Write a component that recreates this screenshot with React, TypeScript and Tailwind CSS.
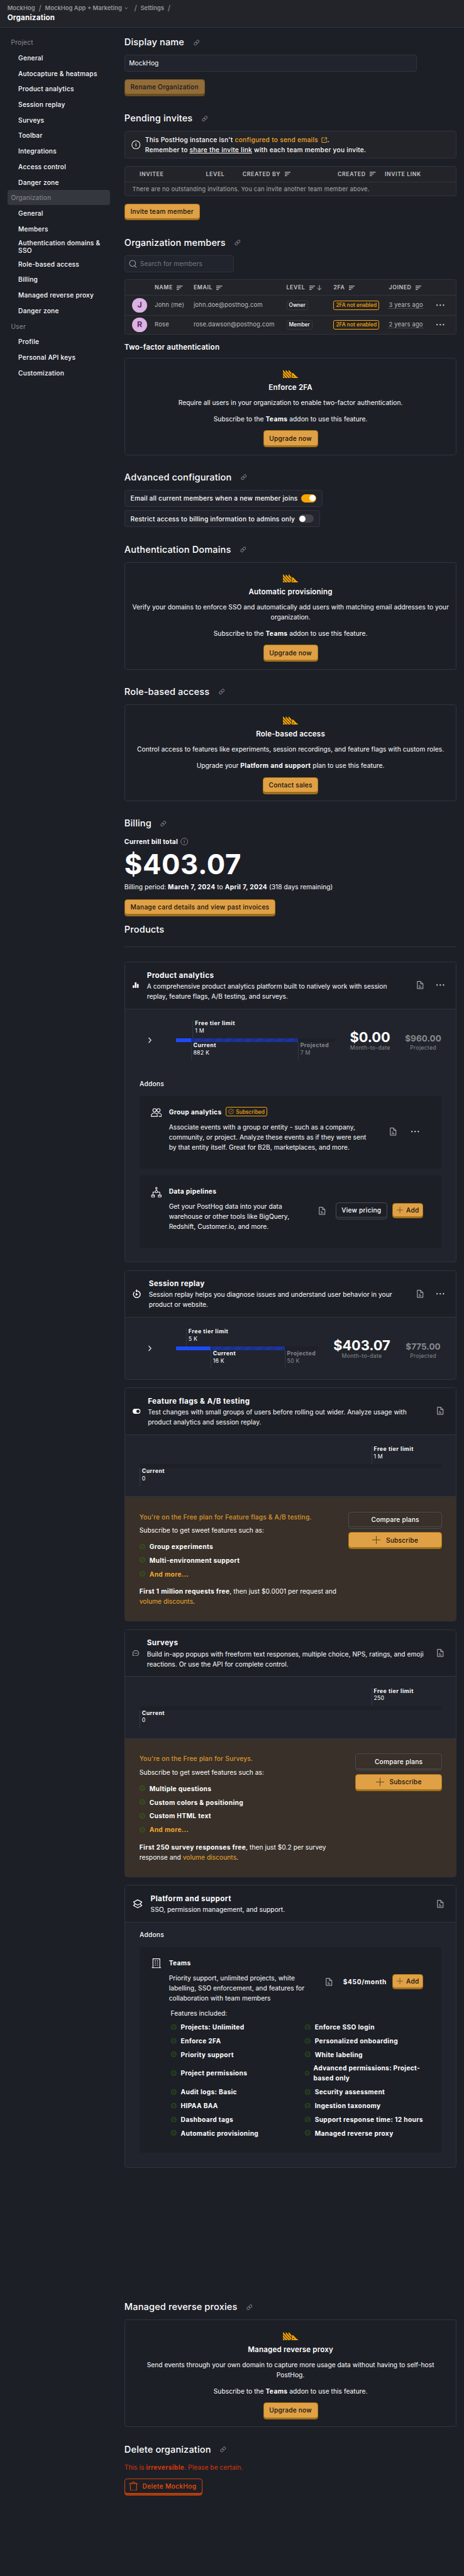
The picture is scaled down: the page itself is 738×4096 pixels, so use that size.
import React from "react";
import { Link as LinkIcon } from "lucide-react";

type P = { children?: React.ReactNode; className?: string };

/* ---------- icons ---------- */

function Sort({ down }: { down?: boolean }) {
  return (
    <span className="ml-[9px] inline-flex items-center gap-[4px]">
      <svg width="13" height="10" viewBox="0 0 13 10" stroke="currentColor" strokeWidth="1.6" className="shrink-0">
        <path d="M0 1.3h13M0 5h9M0 8.7h5" />
      </svg>
      {down && (
        <svg width="11" height="12" viewBox="0 0 11 12" fill="none" stroke="currentColor" strokeWidth="1.3">
          <path d="M5.5 .5v10.5M1 6.8 5.5 11.2 10 6.8" />
        </svg>
      )}
    </span>
  );
}

function Doc() {
  return (
    <svg width="20" height="20" viewBox="0 0 24 24" fill="none" stroke="#c4c5c7" strokeWidth="1.6" className="shrink-0">
      <path d="M4.6 2.6h8.6l6.2 6.2v12.6H4.6zM13.2 2.6v6.2h6.2M8.6 13.6h4M8.6 17.4h6.8" />
    </svg>
  );
}

function Dots() {
  return (
    <svg width="20" height="20" viewBox="0 0 20 20" fill="#d2d2d4" className="shrink-0">
      <circle cx="3" cy="10" r="1.6" />
      <circle cx="10" cy="10" r="1.6" />
      <circle cx="17" cy="10" r="1.6" />
    </svg>
  );
}

function Info({ className = "" }: P) {
  return (
    <svg viewBox="0 0 24 24" fill="none" stroke="currentColor" strokeWidth="1.7" className={className}>
      <circle cx="12" cy="12" r="10.6" />
      <path d="M10.4 10.6H12v6.2M12 6.7v1.8" />
    </svg>
  );
}

function Check({ className = "" }: P) {
  return (
    <svg viewBox="0 0 24 24" fill="none" stroke="currentColor" strokeWidth="1.9" className={`shrink-0 ${className}`}>
      <circle cx="12" cy="12" r="10.5" />
      <path d="m8 12.6 3 3 5-7.4" />
    </svg>
  );
}

function Plus({ className = "" }: P) {
  return (
    <svg viewBox="0 0 20 20" stroke="#5c4220" strokeWidth="1.5" className={className}>
      <path d="M10 0v20M0 10h20" />
    </svg>
  );
}

function Logo() {
  return (
    <svg width="33" height="18" viewBox="0 5.4 48 24.6" preserveAspectRatio="none" fill="#f7a501">
      <path d="m0 23.41 6.53 6.53H0v-6.53Zm0-2.41 8.94 8.94h6.53L0 14.47V21Zm0-8.94 17.88 17.88h6.53L0 5.53v6.53Zm8.94 0 17.88 17.88v-6.53L8.94 5.53v6.53Zm8.94-6.53v6.53L26.82 21v-6.53l-8.94-8.94Z" />
      <path
        fillRule="evenodd"
        d="M28.6 15v14.94h19.1v-2.4c-1.9 0-3.200-.6-4.400-1.800L32.600 15.200Zm5.100 12a1.800 1.800 0 1 1 0-3.600 1.800 1.800 0 0 1 0 3.600Z"
      />
    </svg>
  );
}

/* ---------- building blocks ---------- */

function Button({ children, className = "", dim, small }: P & { dim?: boolean; small?: boolean }) {
  return (
    <button
      className={`flex flex-col rounded-[6px] border border-[#b17816] bg-[#8f6926] pb-[2px] ${small ? "h-[33px]" : "h-[37px]"} ${dim ? "opacity-60" : ""} ${className}`}
    >
      <span className="flex w-full flex-1 items-center justify-center rounded-[5px] border-b border-[#b17816] bg-[#e0a045] font-medium tracking-[0.3px] whitespace-nowrap text-[#111]">
        {children}
      </span>
    </button>
  );
}

function Outline({ children, className = "" }: P) {
  return (
    <button className={`flex h-[37px] flex-col rounded-[6px] border border-[#4a4c52] pb-[2px] ${className}`}>
      <span className="flex w-full flex-1 items-center justify-center rounded-[5px] border-b border-[#4a4c52] font-medium tracking-[0.3px] whitespace-nowrap">
        {children}
      </span>
    </button>
  );
}

function Section({ title, children }: P & { title: string }) {
  return (
    <section className="flex flex-col items-start">
      <h2 className="mb-[12px] flex h-[30px] items-center text-[20px] font-medium tracking-[0.22px]">
        {title}
        <LinkIcon className="ml-[20px] size-[13px] text-[#b9babd]" strokeWidth={2} />
      </h2>
      {children}
    </section>
  );
}

function Gate({ title, text, addon, cta, cls }: { title: string; text: string; addon: React.ReactNode; cta: string; cls: string }) {
  return (
    <div className={`flex w-full flex-col items-center rounded-[5px] border border-[#30343e] px-2 pt-[25px] text-center leading-[22px] ${cls}`}>
      <Logo />
      <h3 className="mt-[10px] text-[16px] leading-[24px] font-semibold tracking-[0.2px]">{title}</h3>
      <p className="mt-[9px] whitespace-pre-line">{text}</p>
      <p className="mt-[14px] mb-[14px]">{addon}</p>
      <Button className="px-0">
        <span className="px-[12px]">{cta}</span>
      </Button>
    </div>
  );
}

const teams = (
  <>
    Subscribe to the <b>Teams</b> addon to use this feature.
  </>
);

function Toggle({ on }: { on?: boolean }) {
  return (
    <span className={`flex h-[18px] w-[33px] items-center rounded-full px-[2px] ${on ? "justify-end bg-[#f7a501]" : "bg-[#43444a]"}`}>
      <span className="size-[14px] rounded-full bg-white" />
    </span>
  );
}

function NavItem({ children, head, active }: P & { head?: boolean; active?: boolean }) {
  return (
    <a
      className={`flex min-h-[33px] items-center rounded-[5px] py-[4px] leading-[17px] font-medium tracking-[0.33px] ${head ? "pl-[8px] text-[#8c8d91]" : "pl-[24px]"} ${active ? "bg-[#35373e]" : ""}`}
    >
      {children}
    </a>
  );
}

function Mark({ label, value, className = "" }: { label: string; value: string; className?: string }) {
  return (
    <div className={`h-[40px] shrink-0 border-l border-[#35383f] pl-[4px] text-[12px] leading-[16px] whitespace-nowrap ${className}`}>
      <div className="font-bold tracking-[0.75px]">{label}</div>
      <div className="tracking-[0.3px]">{value}</div>
    </div>
  );
}

function ProductHead({ icon, title, lines, dots, cls }: { icon: React.ReactNode; title: string; lines: string[]; dots?: boolean; cls: string }) {
  return (
    <div className={`flex shrink-0 items-center border-b border-[#30343e] pl-[17px] ${cls}`}>
      {icon}
      <div className="leading-[22px] whitespace-nowrap">
        <h3 className="text-[16px] leading-[25px] font-bold tracking-[0.58px]">{title}</h3>
        {lines.map((l) => (
          <p key={l}>{l}</p>
        ))}
      </div>
      <div className="mr-[24px] ml-auto flex gap-[24px]">
        <Doc />
        {dots && <Dots />}
      </div>
    </div>
  );
}

function Card({ children, className = "" }: P) {
  return (
    <div className={`flex w-full flex-col overflow-hidden rounded-[6px] border border-[#30343e] bg-[#21242c] ${className}`}>{children}</div>
  );
}

type UsageProps = {
  bar: string;
  free: string;
  used: string;
  rest: string;
  limit: string;
  current: string;
  projected: string;
  total: string;
  future: string;
};

function Usage(p: UsageProps) {
  return (
    <div className="flex h-[88px] items-center pr-[32px] pl-[50px]">
      <svg width="10" height="14" viewBox="0 0 10 14" fill="none" stroke="#d5d5d7" strokeWidth="2">
        <path d="m2 1.5 5 5.5-5 5.5" />
      </svg>
      <div className={`ml-[51px] shrink-0 ${p.bar}`}>
        <Mark className={p.free} label="Free tier limit" value={p.limit} />
        <div className="flex h-[8px] bg-[#1e2028]">
          <div className={`mr-[1px] bg-[#1d4aff] ${p.used}`} />
          <div className={`bg-[repeating-linear-gradient(135deg,#1b2f8f_0_8px,#1c3597_8px_16px)] ${p.rest}`} />
        </div>
        <div className="flex">
          <div className={p.used} />
          <Mark className={p.rest} label="Current" value={p.current} />
          <Mark className="border-[#2b2e36] text-[#88898d]" label="Projected" value={p.projected} />
        </div>
      </div>
      <div className="ml-auto text-right">
        <div className="pt-[4px] text-[30px] leading-[30px] font-bold tracking-[-0.1px]">{p.total}</div>
        <div className={`text-[12px] leading-[16px] tracking-[0.37px] text-[#88898d] ${p.total.length > 5 ? "text-center" : ""}`}>Month-to-date</div>
      </div>
      <div className="ml-[32px] w-[80px] text-center text-[#88898d]">
        <div className="pt-[10px] text-[18.5px] leading-[24px] font-bold">{p.future}</div>
        <div className="text-[12px] leading-[16px] tracking-[0.37px]">Projected</div>
      </div>
    </div>
  );
}

function EmptyUsage({ limit }: { limit: string }) {
  return (
    <div className="h-[136px] shrink-0 border-b border-[#30343e] px-[31.5px] pt-[24px]">
      <Mark className="ml-[507px]" label="Free tier limit" value={limit} />
      <div className="h-[8px] bg-[#1e2028]" />
      <Mark label="Current" value="0" />
    </div>
  );
}

function Feature({ children, more }: P & { more?: boolean }) {
  return (
    <div className={`flex h-[30px] items-center gap-[9px] pl-px font-bold tracking-[0.5px] ${more ? "text-[#f1a82c]" : ""}`}>
      <Check className="size-[12px] text-[#388600]" />
      <span>{children}</span>
    </div>
  );
}

function Upsell({ name, features, children, cls }: P & { name: string; features: string[]; cls: string }) {
  return (
    <div className="flex flex-1 justify-between bg-[#383029] pt-[32px] pr-[31px] pl-[31.5px] leading-[22px]">
      <div className="whitespace-nowrap">
        <p className="font-medium tracking-[0.25px] text-[#dc962a]">You're on the Free plan for {name}.</p>
        <p className="mt-[7px] mb-[10px]">Subscribe to get sweet features such as:</p>
        {features.map((f) => (
          <Feature key={f}>{f}</Feature>
        ))}
        <Feature more>And more...</Feature>
        <p className="mt-[12px]">{children}</p>
      </div>
      <div className={`flex flex-col gap-[8px] ${cls}`}>
        <Outline className="w-full">Compare plans</Outline>
        <Button className="w-full">
          <Plus className="mr-[12px] size-[18px]" />
          Subscribe
        </Button>
      </div>
    </div>
  );
}

const th = "font-semibold tracking-[0.82px] text-[12px] text-[#c3c4c6] flex items-center whitespace-nowrap";

function MemberRow({ initial, name, email, level }: { initial: string; name: string; email: string; level: string }) {
  return (
    <div className="flex h-[43px] items-center border-t border-[#30343e] text-[13px] tracking-[0.23px] text-[#bbbcbe]">
      <div className="ml-[16px] flex size-[32px] items-center justify-center rounded-full bg-[#dcb1e3] text-[17px] font-bold text-[#572e5e]">
        {initial}
      </div>
      <div className="ml-[17px] w-[85px]">{name}</div>
      <div className="w-[203px]">{email}</div>
      <div className="w-[103px]">
        <span className="inline-flex h-[21px] items-center rounded-[4px] border border-[#35383f] px-[4px] text-[11.5px] font-medium tracking-[0px] text-white">
          {level}
        </span>
      </div>
      <div className="w-[121px]">
        <span className="inline-flex h-[21px] items-center rounded-[4px] border border-[#f7a501] px-[4px] text-[11.5px] font-medium tracking-[0px] whitespace-nowrap text-[#f7a501]">
          2FA not enabled
        </span>
      </div>
      <div className="w-[103px]">
        <span className="border-b border-dotted border-[#6c6d72]">{level === "Owner" ? "3" : "2"} years ago</span>
      </div>
      <Dots />
    </div>
  );
}

function AddonHead({ icon }: { icon: React.ReactNode }) {
  return (
    <div className="flex w-[64px] shrink-0 justify-center pt-[24px] pl-[8px]">
      <div className="flex size-[24px] items-center justify-center">{icon}</div>
    </div>
  );
}

const AddButton = () => (
  <Button small className="w-[67px]">
    <Plus className="mr-[7px] size-[14px]" />
    Add
  </Button>
);

const nav: [string, string[]][] = [
  ["Project", ["General", "Autocapture & heatmaps", "Product analytics", "Session replay", "Surveys", "Toolbar", "Integrations", "Access control", "Danger zone"]],
  ["Organization", ["General", "Members", "Authentication domains & SSO", "Role-based access", "Billing", "Managed reverse proxy", "Danger zone"]],
  ["User", ["Profile", "Personal API keys", "Customization"]],
];

const teamFeatures: [string, string][] = [
  ["Projects: Unlimited", "Enforce SSO login"],
  ["Enforce 2FA", "Personalized onboarding"],
  ["Priority support", "White labeling"],
  ["Project permissions", "Advanced permissions: Project-based only"],
  ["Audit logs: Basic", "Security assessment"],
  ["HIPAA BAA", "Ingestion taxonomy"],
  ["Dashboard tags", "Support response time: 12 hours"],
  ["Automatic provisioning", "Managed reverse proxy"],
];

export default function App() {
  return (
    <div className="min-h-[5631px] overflow-hidden bg-[#1d1f27] font-['Inter',sans-serif] text-[14px] leading-[20px] tracking-[0.08px] text-white [zoom:0.7274] [&_b]:tracking-[0.5px]">
      <header className="h-[60px] border-b border-[#30343e] bg-[#232429] pt-[9px] pl-[16px]">
        <div className="flex h-[18px] items-center text-[13px] font-semibold tracking-[0px] text-[#96979a]">
          MockHog
          <span className="mx-[8px] text-[16px] font-normal">/</span>
          MockHog App + Marketing
          <svg width="8" height="6" viewBox="0 0 8 6" fill="none" stroke="currentColor" strokeWidth="1.2" className="ml-[6px]">
            <path d="m1 1 3 3.5L7 1" />
          </svg>
          <span className="mr-[8px] ml-[13px] text-[16px] font-normal">/</span>
          Settings
          <span className="mx-[8px] text-[16px] font-normal">/</span>
        </div>
        <div className="mt-[2px] text-[16px] font-bold tracking-[0.3px]">Organization</div>
      </header>

      <div className="flex pr-[16px] pl-[16px]">
        <nav className="mt-[16px] flex w-[224px] shrink-0 flex-col gap-[1px]">
          {nav.map(([group, items]) => (
            <React.Fragment key={group}>
              <NavItem head active={group === "Organization"}>
                <span className="font-normal">{group}</span>
              </NavItem>
              {items.map((i) => (
                <NavItem key={i}>{i}</NavItem>
              ))}
            </React.Fragment>
          ))}
        </nav>

        <main className="ml-[32px] flex min-w-0 flex-1 flex-col gap-[34px] pt-[18px]">
          <Section title="Display name">
            <div className="flex h-[37px] w-[640px] items-center rounded-[5px] border border-[#30343e] bg-[#21242c] pl-[9px]">MockHog</div>
            <Button dim className="mt-[16px]">
              <span className="px-[12px]">Rename Organization</span>
            </Button>
          </Section>

          <Section title="Pending invites">
            <div className="flex h-[61px] w-full items-center rounded-[5px] border border-[#30343e] bg-[#232429] pl-[14px] leading-[22px] font-medium tracking-[0.36px]">
              <Info className="mr-[10px] size-[20px]" />
              <div>
                <p>
                  This PostHog instance isn't <span className="text-[#f1a82c]">configured to send emails</span>
                  <svg viewBox="0 0 14 14" fill="none" stroke="#f1a82c" strokeWidth="1.4" className="ml-[7px] inline size-[13px] align-[-2px]">
                    <path d="M6 1.5H1.3v11h11V8M8 1.2h4.8V6M12.6 1.4 6 8" />
                  </svg>
                  .
                </p>
                <p>
                  Remember to <span className="underline underline-offset-2">share the invite link</span> with each team member you invite.
                </p>
              </div>
            </div>
            <div className="mt-[16px] h-[66px] w-full rounded-[5px] border border-[#30343e] bg-[#232429]">
              <div className="flex h-[33px] items-center pl-[32px]">
                <span className={`w-[145px] ${th}`}>INVITEE</span>
                <span className={`w-[80px] ${th}`}>LEVEL</span>
                <span className={`w-[208px] ${th}`}>
                  CREATED BY <Sort />
                </span>
                <span className={`w-[103px] ${th}`}>
                  CREATED <Sort />
                </span>
                <span className={th}>INVITE LINK</span>
              </div>
              <div className="flex h-[32px] items-center border-t border-[#30343e] pl-[16px] text-[13px] tracking-[0.27px] text-[#a9aaad]">
                There are no outstanding invitations. You can invite another team member above.
              </div>
            </div>
            <Button className="mt-[16px]">
              <span className="px-[12px]">Invite team member</span>
            </Button>
          </Section>

          <Section title="Organization members">
            <div className="flex h-[37px] w-[240px] items-center rounded-[5px] border border-[#30343e] bg-[#21242c] pl-[9px] text-[#77787d]">
              <svg width="18" height="18" viewBox="0 0 18 18" fill="none" stroke="#a5a6a9" strokeWidth="1.4" className="mr-[6px]">
                <circle cx="8" cy="8" r="6.6" />
                <path d="m12.6 13 4 4" />
              </svg>
              Search for members
            </div>
            <div className="mt-[16px] h-[121px] w-full rounded-[5px] border border-[#30343e] bg-[#232429]">
              <div className="flex h-[33px] items-center pl-[65px]">
                <span className={`w-[85px] ${th}`}>
                  NAME <Sort />
                </span>
                <span className={`w-[203px] ${th}`}>
                  EMAIL <Sort />
                </span>
                <span className={`w-[103px] ${th}`}>
                  LEVEL <Sort down />
                </span>
                <span className={`w-[121px] ${th}`}>
                  2FA <Sort />
                </span>
                <span className={th}>
                  JOINED <Sort />
                </span>
              </div>
              <MemberRow initial="J" name="John (me)" email="john.doe@posthog.com" level="Owner" />
              <MemberRow initial="R" name="Rose" email="rose.dawson@posthog.com" level="Member" />
            </div>
            <h3 className="mt-[16px] mb-[10px] text-[16px] leading-[24px] font-semibold tracking-[0.27px]">Two-factor authentication</h3>
            <Gate cls="h-[213px]" title="Enforce 2FA" text="Require all users in your organization to enable two-factor authentication." addon={teams} cta="Upgrade now" />
          </Section>

          <Section title="Advanced configuration">
            <div className="flex h-[37px] items-center gap-[8px] rounded-[5px] border border-[#30343e] bg-[#21242c] px-[12px] font-medium tracking-[0.29px]">
              Email all current members when a new member joins <Toggle on />
            </div>
            <div className="mt-[8px] flex h-[37px] items-center gap-[8px] rounded-[5px] border border-[#30343e] bg-[#21242c] px-[12px] font-medium tracking-[0.29px]">
              Restrict access to billing information to admins only <Toggle />
            </div>
          </Section>

          <Section title="Authentication Domains">
            <Gate
              cls="h-[235px]"
              title="Automatic provisioning"
              text={"Verify your domains to enforce SSO and automatically add users with matching email addresses to your\norganization."}
              addon={teams}
              cta="Upgrade now"
            />
          </Section>

          <Section title="Role-based access">
            <Gate
              cls="h-[212px]"
              title="Role-based access"
              text="Control access to features like experiments, session recordings, and feature flags with custom roles."
              addon={
                <>
                  Upgrade your <b>Platform and support</b> plan to use this feature.
                </>
              }
              cta="Contact sales"
            />
          </Section>

          <Section title="Billing">
            <div className="flex h-[24px] items-center font-bold tracking-[0.4px]">
              Current bill total <Info className="ml-[5px] size-[17px] text-[#8c8d91]" />
            </div>
            <div className="h-[76px] text-[60px] leading-[76px] font-bold tracking-[0.8px]">$403.07</div>
            <p className="h-[22px] leading-[22px]">
              Billing period: <b>March 7, 2024</b> to <b>April 7, 2024</b> (318 days remaining)
            </p>
            <Button className="mt-[16px]">
              <span className="px-[12px]">Manage card details and view past invoices</span>
            </Button>
            <h2 className="mt-[16px] h-[30px] text-[20px] leading-[30px] font-medium tracking-[0.22px]">Products</h2>
            <div className="mt-[20px] mb-[32px] w-full border-b border-[#30343e]" />

            <div className="mb-[256px] flex w-full flex-col gap-[17px]">
              <Card className="h-[658px]">
                <ProductHead
                  cls="h-[103px] bg-[#1d1f27]"
                  dots
                  icon={
                    <svg width="13" height="12" viewBox="0 0 13 12" fill="#fff" className="mr-[18px] shrink-0">
                      <rect y="6.5" width="3.6" height="5.5" rx=".6" />
                      <rect x="4.7" width="3.6" height="12" rx=".6" />
                      <rect x="9.4" y="3.5" width="3.6" height="8.5" rx=".6" />
                    </svg>
                  }
                  title="Product analytics"
                  lines={["A comprehensive product analytics platform built to natively work with session", "replay, feature flags, A/B testing, and surveys."]}
                />
                <div className="pt-[24px]">
                  <Usage
                    bar="w-[349px]"
                    free="ml-[37px]"
                    used="w-[33px]"
                    rest="w-[234px]"
                    limit="1 M"
                    current="882 K"
                    projected="7 M"
                    total="$0.00"
                    future="$960.00"
                  />
                </div>
                <div className="px-[32px]">
                  <h4 className="mt-[40px] mb-[16px] leading-[22px] font-medium tracking-[0.3px]">Addons</h4>
                  <div className="flex h-[158px] rounded-[5px] bg-[#1d1f27]">
                    <AddonHead
                      icon={
                        <svg viewBox="0 0 24 24" fill="none" stroke="#fff" strokeWidth="1.5" className="size-[24px]">
                          <circle cx="8" cy="7.3" r="3.6" />
                          <circle cx="16.6" cy="7.3" r="3.6" />
                          <path d="M.9 20.8v-1.6C1 15.6 4 13.4 7.6 13.4s6.4 2.2 6.5 5.8v1.6zM17 20.8h6.2v-1.6c-.1-3.4-3-5.8-6.6-5.8-1 0-2 .2-2.8.6" />
                        </svg>
                      }
                    />
                    <div className="pt-[23px] leading-[22px] whitespace-nowrap">
                      <div className="mb-[11px] flex h-[22px] items-center gap-[9px]">
                        <b>Group analytics</b>
                        <span className="flex h-[21px] items-center gap-[5px] rounded-[4px] border border-[#f7a501] px-[4px] text-[11.5px] font-medium tracking-[0px] text-[#f7a501]">
                          <Check className="size-[12px]" /> Subscribed
                        </span>
                      </div>
                      <p>Associate events with a group or entity - such as a company,</p>
                      <p>community, or project. Analyze these events as if they were sent</p>
                      <p>by that entity itself. Great for B2B, marketplaces, and more.</p>
                    </div>
                    <div className="mt-[67px] mr-[48px] ml-auto flex gap-[28px]">
                      <Doc />
                      <Dots />
                    </div>
                  </div>
                  <div className="mt-[16px] flex h-[158px] rounded-[5px] bg-[#1d1f27]">
                    <AddonHead
                      icon={
                        <svg viewBox="0 0 24 24" fill="none" stroke="#fff" strokeWidth="1.4" className="size-[24px]">
                          <circle cx="12" cy="3" r="1.7" />
                          <circle cx="12" cy="10.8" r="2.6" />
                          <path d="M12 4.8v3.3M9.5 11.6H4.6V18M14.5 11.6h4.9V18M1.6 18.4h6.2v4H1.6zM16.2 18.4h6.2v4h-6.2z" />
                        </svg>
                      }
                    />
                    <div className="pt-[23px] leading-[22px] whitespace-nowrap">
                      <b className="mb-[11px] block">Data pipelines</b>
                      <p>Get your PostHog data into your data</p>
                      <p>warehouse or other tools like BigQuery,</p>
                      <p>Redshift, Customer.io, and more.</p>
                    </div>
                    <div className="mt-[58px] mr-[40px] ml-auto flex h-[37px] items-center">
                      <Doc />
                      <Outline className="mr-[12px] ml-[20px] w-[112px]">View pricing</Outline>
                      <AddButton />
                    </div>
                  </div>
                </div>
              </Card>

              <Card className="h-[239px]">
                <ProductHead
                  cls="h-[101.5px] bg-[#1d1f27]"
                  dots
                  icon={
                    <svg width="18" height="20" viewBox="0 0 18 20" fill="none" stroke="#fff" strokeWidth="2" className="mr-[17px] shrink-0">
                      <path d="M9 3.6a7.4 7.4 0 1 1-5.2 2.2" />
                      <path d="M9.6 0v7.2L5.8 3.6zM6.7 7.8v6.6l5.4-3.3z" fill="#fff" stroke="none" />
                    </svg>
                  }
                  title="Session replay"
                  lines={["Session replay helps you diagnose issues and understand user behavior in your", "product or website."]}
                />
                <div className="pt-[24px]">
                  <Usage
                    bar="w-[311px]"
                    free="ml-[22.5px]"
                    used="w-[76px]"
                    rest="w-[162px]"
                    limit="5 K"
                    current="16 K"
                    projected="50 K"
                    total="$403.07"
                    future="$775.00"
                  />
                </div>
              </Card>

              <Card className="h-[512px]">
                <ProductHead
                  cls="h-[102.5px] bg-[#1d1f27]"
                  icon={
                    <svg width="17" height="11" viewBox="0 0 17 11" className="mr-[16px] shrink-0">
                      <rect x=".8" y=".8" width="15.4" height="9.4" rx="4.7" fill="#fff" stroke="#fff" strokeWidth="1.5" />
                      <circle cx="11.6" cy="5.5" r="3.5" fill="#1d1f27" />
                    </svg>
                  }
                  title="Feature flags & A/B testing"
                  lines={["Test changes with small groups of users before rolling out wider. Analyze usage with", "product analytics and session replay."]}
                />
                <EmptyUsage limit="1 M" />
                <Upsell cls="w-[204px]" name="Feature flags & A/B testing" features={["Group experiments", "Multi-environment support"]}>
                  <b>First 1 million requests free</b>, then just $0.0001 per request and
                  <br />
                  <span className="text-[#f1a82c]">volume discounts</span>.
                </Upsell>
              </Card>

              <Card className="h-[542px]">
                <ProductHead
                  cls="h-[102.5px] bg-[#1d1f27]"
                  icon={
                    <svg width="14" height="13" viewBox="0 0 14 13" fill="none" stroke="#fff" strokeWidth="1" className="mr-[17px] shrink-0">
                      <path d="M.6 12.4V6.3A5.8 5.8 0 0 1 7 .6a6 6 0 0 1 6.4 5.8A6 6 0 0 1 7.2 12.4z" />
                      <path d="M3.8 6.5h1.4M6.4 6.5h1.4M9 6.5h1.4" strokeWidth="1.4" />
                    </svg>
                  }
                  title="Surveys"
                  lines={["Build in-app popups with freeform text responses, multiple choice, NPS, ratings, and emoji", "reactions. Or use the API for complete control."]}
                />
                <EmptyUsage limit="250" />
                <Upsell cls="w-[189px]" name="Surveys" features={["Multiple questions", "Custom colors & positioning", "Custom HTML text"]}>
                  <b>First 250 survey responses free</b>, then just $0.2 per survey
                  <br />
                  response and <span className="text-[#f1a82c]">volume discounts</span>.
                </Upsell>
              </Card>

              <Card className="h-[618px]">
                <ProductHead
                  cls="h-[81px] bg-[#1d1f27]"
                  icon={
                    <svg width="22" height="20" viewBox="0 0 22 20" fill="none" stroke="#fff" strokeWidth="1.8" className="mr-[17px] shrink-0">
                      <path d="M11 1.3 20 6l-3.600 4L11 12.700 5.600 10 2 6zM5.400 10 2 13.800l9 4.800 9-4.800-3.400-3.800" strokeLinejoin="round" />
                    </svg>
                  }
                  title="Platform and support"
                  lines={["SSO, permission management, and support."]}
                />
                <div className="px-[32px] pt-[15px]">
                  <h4 className="mb-[16px] leading-[22px] font-medium tracking-[0.3px]">Addons</h4>
                  <div className="flex h-[450px] rounded-[5px] bg-[#1d1f27]">
                    <AddonHead
                      icon={
                        <svg viewBox="0 0 24 24" fill="none" stroke="#fff" strokeWidth="1.5" className="size-[24px]">
                          <path d="M4.5 21.5V2.2h15v19.3M1.8 21.7h20.4" />
                          <path d="M8.5 7h2.2M13.3 7h2.2M8.5 11.5h2.2M13.3 11.5h2.2M8.5 16h2.2M13.3 16h2.2" strokeWidth="2" />
                        </svg>
                      }
                    />
                    <div className="flex-1 pt-[23px] leading-[22px] whitespace-nowrap">
                      <div className="flex">
                        <div>
                          <b className="mb-[11px] block">Teams</b>
                          <p>Priority support, unlimited projects, white</p>
                          <p>labelling, SSO enforcement, and features for</p>
                          <p>collaboration with team members</p>
                        </div>
                        <div className="mt-[37px] mr-[40px] ml-auto flex h-[33px] items-center">
                          <Doc />
                          <span className="mr-[12px] ml-[21px] w-[96px] font-bold tracking-[0.9px]">$450/month</span>
                          <AddButton />
                        </div>
                      </div>
                      <p className="mt-[12px] ml-[4px]">Features included:</p>
                      <div className="mt-[4px] ml-[4px] flex flex-col">
                        {teamFeatures.map(([a, b]) => (
                          <div key={a} className={`flex items-center ${b.length > 35 ? "h-[52px]" : "h-[30px]"}`}>
                            <div className="w-[293px]">
                              <Feature>{a}</Feature>
                            </div>
                            {b.length > 35 ? (
                              <div className="flex w-[260px] items-center gap-[8px] pl-px font-bold tracking-[0.45px] whitespace-normal">
                                <Check className="size-[10px] text-[#388600]" />
                                <span>{b}</span>
                              </div>
                            ) : (
                              <Feature>{b}</Feature>
                            )}
                          </div>
                        ))}
                      </div>
                    </div>
                  </div>
                </div>
              </Card>
            </div>
          </Section>

          <Section title="Managed reverse proxies">
            <Gate
              cls="h-[235px]"
              title="Managed reverse proxy"
              text={"Send events through your own domain to capture more usage data without having to self-host\nPostHog."}
              addon={teams}
              cta="Upgrade now"
            />
          </Section>

          <Section title="Delete organization">
            <p className="mb-[14px] h-[22px] leading-[22px] text-[#db3707]">
              This is <b>irreversible</b>. Please be certain.
            </p>
            <button className="flex h-[37px] flex-col rounded-[6px] border border-[#d14509] bg-[#a03b0d] pb-[2px] font-medium tracking-[0.5px] text-[#f54e00]">
              <span className="flex flex-1 items-center rounded-[5px] border-b border-[#d14509] bg-[#1d1f27] pr-[12px] pl-[8px]">
                <svg width="20" height="20" viewBox="0 0 20 20" fill="none" stroke="currentColor" strokeWidth="1.4" className="mr-[10px]">
                  <path d="M.4 4h19.2M6 3.800C6.500 1.800 8 .8 10 .8s3.500 1 4 3M2.800 4l.9 15.200h12.600L17.200 4" />
                </svg>
                Delete MockHog
              </span>
            </button>
          </Section>
        </main>
      </div>
    </div>
  );
}
